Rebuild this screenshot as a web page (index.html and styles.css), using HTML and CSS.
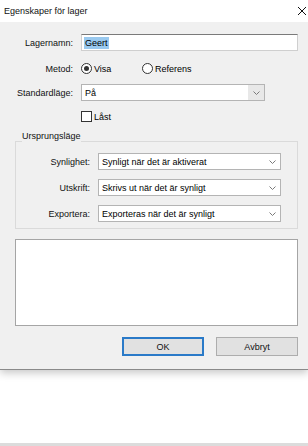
FILE: index.html
```html
<!DOCTYPE html>
<html lang="sv">
<head>
    <meta charset="UTF-8">
    <meta name="viewport" content="width=device-width, initial-scale=1.0">
    <title>Egenskaper för lager</title>
    <link rel="stylesheet" href="styles.css">
</head>
<body>
    <div class="dialog">
        <!-- Title bar -->
        <div class="titlebar">
            <span class="title">Egenskaper för lager</span>
            <svg class="close" width="10" height="10" viewBox="0 0 10 10">
                <path d="M1 1 L9 9 M9 1 L1 9" stroke="#111" stroke-width="1" fill="none"/>
            </svg>
        </div>

        <div class="content">
            <div class="row">
                <label class="row-label">Lagernamn:</label>
                <div class="textbox"><span class="selected">Geert</span></div>
            </div>

            <div class="row row-method">
                <span class="row-label">Metod:</span>
                <span class="option option-first"><span class="radio checked"></span>Visa</span>
                <span class="option"><span class="radio"></span>Referens</span>
            </div>

            <div class="row row-default">
                <span class="row-label">Standardläge:</span>
                <div class="combo combo-short">
                    <span class="combo-text">På</span>
                    <span class="combo-arrow hover">
                        <svg width="7" height="4" viewBox="0 0 7 4"><polyline points="0.5,0.5 3.5,3.5 6.5,0.5" fill="none" stroke="#7a7a7a" stroke-width="1"/></svg>
                    </span>
                </div>
            </div>

            <div class="row row-lock">
                <span class="row-label"></span>
                <span class="option"><span class="checkbox"></span>Låst</span>
            </div>

            <fieldset class="group">
                <legend>Ursprungsläge</legend>
                <div class="row group-row first">
                    <span class="group-label">Synlighet:</span>
                    <div class="combo">
                        <span class="combo-text">Synligt när det är aktiverat</span>
                        <span class="combo-arrow">
                            <svg width="7" height="4" viewBox="0 0 7 4"><polyline points="0.5,0.5 3.5,3.5 6.5,0.5" fill="none" stroke="#7a7a7a" stroke-width="1"/></svg>
                        </span>
                    </div>
                </div>
                <div class="row group-row">
                    <span class="group-label">Utskrift:</span>
                    <div class="combo">
                        <span class="combo-text">Skrivs ut när det är synligt</span>
                        <span class="combo-arrow">
                            <svg width="7" height="4" viewBox="0 0 7 4"><polyline points="0.5,0.5 3.5,3.5 6.5,0.5" fill="none" stroke="#7a7a7a" stroke-width="1"/></svg>
                        </span>
                    </div>
                </div>
                <div class="row group-row">
                    <span class="group-label">Exportera:</span>
                    <div class="combo">
                        <span class="combo-text">Exporteras när det är synligt</span>
                        <span class="combo-arrow">
                            <svg width="7" height="4" viewBox="0 0 7 4"><polyline points="0.5,0.5 3.5,3.5 6.5,0.5" fill="none" stroke="#7a7a7a" stroke-width="1"/></svg>
                        </span>
                    </div>
                </div>
            </fieldset>

            <div class="notes"></div>

            <div class="buttons">
                <button class="btn default">OK</button>
                <button class="btn">Avbryt</button>
            </div>
        </div>
    </div>

    <div class="bottom-bar"></div>
</body>
</html>
```

FILE: styles.css
```css
* {
    box-sizing: border-box;
}
body {
    margin: 0;
    height: 446px;
    overflow: hidden;
    background: #fff;
    font-family: "Liberation Sans", Arial, sans-serif;
    font-size: 9px;
    color: #000;
    display: flex;
    flex-direction: column;
}
.dialog {
    background: #f0f0f0;
    border-bottom: 1px solid #8a8a8a;
    box-shadow: 0 3px 8px rgba(0, 0, 0, 0.22);
}
.titlebar {
    height: 22px;
    background: #fff;
    display: flex;
    align-items: center;
    justify-content: space-between;
    padding: 0 1px 0 4px;
}
.title {
    font-size: 9px;
    color: #111;
}
.content {
    padding: 12px 10px 13px 15px;
}
.row {
    display: flex;
    align-items: center;
    height: 17px;
}
.row-label {
    width: 58px;
    margin-right: 8px;
    text-align: right;
    flex: none;
    color: #111;
}
.row-method {
    margin-top: 9px;
}
.row-default {
    margin-top: 7px;
}
.row-lock {
    margin-top: 7px;
}
.textbox {
    flex: 1;
    height: 17px;
    background: #fff;
    border: 1px solid #cfcfcf;
    border-top-color: #7a7a7a;
    display: flex;
    align-items: center;
    padding-left: 2px;
}
.selected {
    background: #99c9ef;
    padding: 1px 1px;
}
.option {
    display: flex;
    align-items: center;
    gap: 2px;
}
.option-first {
    width: 61px;
}
.radio {
    width: 11px;
    height: 11px;
    border: 1px solid #333;
    border-radius: 50%;
    background: #fff;
    display: flex;
    align-items: center;
    justify-content: center;
}
.radio.checked::after {
    content: "";
    width: 5px;
    height: 5px;
    border-radius: 50%;
    background: #333;
}
.checkbox {
    width: 11px;
    height: 11px;
    border: 1px solid #333;
    background: #fff;
}
.combo {
    flex: 1;
    height: 17px;
    background: #fff;
    border: 1px solid #b4b4b4;
    display: flex;
    align-items: stretch;
}
.combo-short {
    flex: none;
    width: 184px;
}
.combo-text {
    flex: 1;
    padding-left: 3px;
    display: flex;
    align-items: center;
    white-space: nowrap;
}
.combo-arrow {
    width: 16px;
    display: flex;
    align-items: center;
    justify-content: center;
}
.combo-arrow.hover {
    background: #e8e8e8;
}
.group {
    margin: 6px 0 0;
    padding: 0 16px 6px 0;
    border: 1px solid #dadada;
    min-width: 0;
}
.group legend {
    margin-left: 6px;
    padding: 0 0 9px;
    line-height: 11px;
    color: #111;
}
.group-row {
    margin-top: 9px;
}
.group-row.first {
    margin-top: 2px;
}
.group-label {
    width: 74px;
    margin-right: 8px;
    text-align: right;
    flex: none;
    color: #111;
}
.notes {
    margin-top: 10px;
    height: 87px;
    background: #fff;
    border: 1px solid #a5a5a5;
}
.buttons {
    margin-top: 11px;
    display: flex;
    justify-content: flex-end;
    gap: 12px;
}
.btn {
    width: 82px;
    height: 19px;
    padding: 0;
    background: #e1e1e1;
    border: 1px solid #adadad;
    font-family: "Liberation Sans", Arial, sans-serif;
    font-size: 9px;
    color: #111;
}
.btn.default {
    border-color: #2a7ac8;
    box-shadow: inset 0 0 0 1px #2a7ac8;
}
.bottom-bar {
    margin-top: auto;
    height: 3px;
    background: #dcdcdc;
}
```
